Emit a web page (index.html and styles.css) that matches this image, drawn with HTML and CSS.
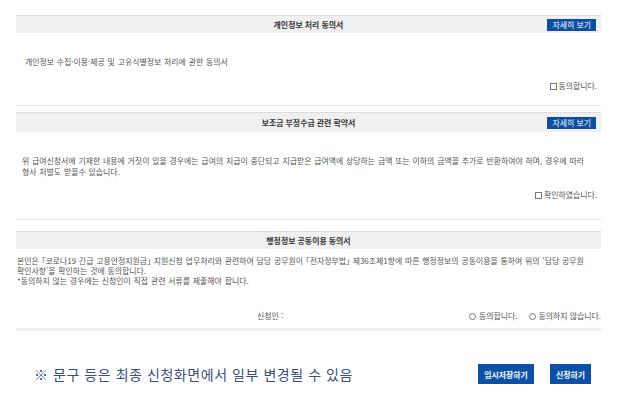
FILE: index.html
```html
<!DOCTYPE html>
<html lang="ko">
<head>
    <meta charset="UTF-8">
    <meta name="viewport" content="width=device-width, initial-scale=1.0">
    <title>동의서</title>
    <link rel="stylesheet" href="styles.css">
</head>
<body>
    <div class="agree-wrap">
        <div class="agree-box box-privacy">
            <div class="agree-head">
                <span class="agree-title">개인정보 처리 동의서</span>
                <button class="detail-btn">자세히 보기</button>
            </div>
            <div class="agree-body">
                <p>개인정보 수집·이용·제공 및 고유식별정보 처리에 관한 동의서</p>
            </div>
            <div class="agree-check"><span class="box-mark"></span>동의합니다.</div>
        </div>

        <div class="agree-box box-pledge">
            <div class="agree-head">
                <span class="agree-title">보조금 부정수급 관련 확약서</span>
                <button class="detail-btn">자세히 보기</button>
            </div>
            <div class="agree-body">
                <p>위 급여신청서에 기재한 내용에 거짓이 있을 경우에는 급여의 지급이 중단되고 지급받은 급여액에 상당하는 금액 또는 이하의 금액을 추가로 반환하여야 하며, 경우에 따라 형사 처벌도 받을수 있습니다.</p>
            </div>
            <div class="agree-check"><span class="box-mark"></span>확인하였습니다.</div>
        </div>

        <div class="agree-box box-share">
            <div class="agree-head">
                <span class="agree-title">행정정보 공동이용 동의서</span>
            </div>
            <div class="agree-body">
                <p>본인은 「코로나19 긴급 고용안정지원금」 지원신청 업무처리와 관련하여 담당 공무원이 「전자정부법」 제36조제1항에 따른 행정정보의 공동이용을 통하여 위의 '담당 공무원 확인사항'을 확인하는 것에 동의합니다.</p>
                <p>*동의하지 않는 경우에는 신청인이 직접 관련 서류를 제출해야 합니다.</p>
            </div>
            <div class="sign-row">
                <span class="sign-label">신청인 :</span>
                <span class="sign-opts">
                    <label><span class="radio-mark"></span>동의합니다.</label>
                    <label><span class="radio-mark"></span>동의하지 않습니다.</label>
                </span>
            </div>
        </div>

        <div class="bottom-row">
            <p class="notice">※ 문구 등은 최종 신청화면에서 일부 변경될 수 있음</p>
            <div class="bottom-btns">
                <button class="main-btn btn-save">임시저장하기</button>
                <button class="main-btn btn-apply">신청하기</button>
            </div>
        </div>
    </div>
</body>
</html>
```

FILE: styles.css
```css
* {
    margin: 0;
    padding: 0;
    box-sizing: border-box;
}

body {
    background: #fff;
    font-family: "Noto Sans CJK KR", "Noto Sans", sans-serif;
    color: #555;
    font-size: 7.9px;
}

.agree-wrap {
    padding: 15px 16px 0;
}

.agree-box {
    border-bottom: 1px solid #e6e6e6;
}

.agree-head {
    position: relative;
    height: 18px;
    display: flex;
    align-items: center;
    justify-content: center;
    background: #f0f0f0;
    border-top: 1px solid #dcdcdc;
}

.agree-title {
    font-weight: bold;
    color: #333;
}

.detail-btn {
    position: absolute;
    right: 5px;
    top: 3px;
    height: 12px;
    padding: 0 5px;
    border: none;
    background: #0b4ea2;
    color: #fff;
    font-family: inherit;
    font-size: 7.9px;
    line-height: 12px;
}

.agree-body p {
    line-height: 11px;
    word-spacing: 0.6px;
    word-break: keep-all;
    font-feature-settings: "halt";
}

.agree-check {
    text-align: right;
    line-height: 11px;
}

.box-mark {
    display: inline-block;
    width: 7px;
    height: 7px;
    border: 1px solid #777;
    margin-right: 2px;
    vertical-align: -1px;
}

.radio-mark {
    display: inline-block;
    width: 7px;
    height: 7px;
    border: 1px solid #777;
    border-radius: 50%;
    margin-right: 3px;
    vertical-align: -1px;
}

/* 개인정보 */
.box-privacy {
    margin-bottom: 6px;
}

.box-privacy .agree-body {
    padding: 23px 9px 0;
}

.box-privacy .agree-check {
    padding: 13px 4px 14px 0;
}

/* 부정수급 */
.box-pledge {
    margin-bottom: 11px;
}

.box-pledge .agree-head {
    height: 20px;
}

.box-pledge .detail-btn {
    top: 4px;
}

.box-pledge .agree-body {
    padding: 23px 6px 0;
}

.box-pledge .agree-check {
    padding: 12px 4px 19px 0;
}

/* 행정정보 */
.box-share {
    border-bottom: 3px solid #efefef;
}

.box-share .agree-body {
    padding: 7px 0 0 1px;
}

.box-share .agree-body p {
    line-height: 10px;
}

.sign-row {
    display: flex;
    justify-content: space-between;
    align-items: center;
    line-height: 11px;
    padding: 24px 0 7px 241px;
}

.sign-opts {
    display: flex;
    gap: 11px;
}

.bottom-row {
    display: flex;
    justify-content: space-between;
    align-items: center;
    padding: 33px 10px 0 18px;
}

.notice {
    font-size: 14px;
    color: #3b4d7e;
    letter-spacing: 0.55px;
}

.bottom-btns {
    display: flex;
    gap: 16px;
}

.main-btn {
    height: 20px;
    border: none;
    background: #0c50a8;
    color: #fff;
    font-family: inherit;
    font-size: 7.9px;
    font-weight: bold;
}

.btn-save {
    width: 56px;
}

.btn-apply {
    width: 41px;
}
```
